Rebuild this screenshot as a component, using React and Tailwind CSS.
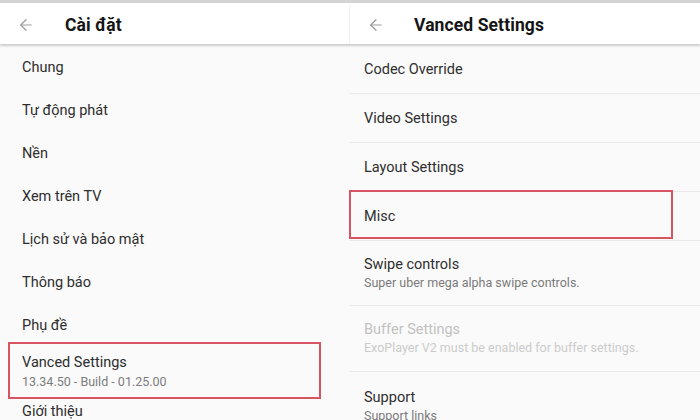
import { ArrowLeft } from 'lucide-react'

const leftItems = ['Chung', 'Tự động phát', 'Nền', 'Xem trên TV', 'Lịch sử và bảo mật', 'Thông báo', 'Phụ đề']

function Header({ title, titleLeft }) {
  return (
    <div className="relative z-10 h-[41px] shrink-0 pt-[3px] bg-white flex items-center shadow-[0_2px_2px_rgba(0,0,0,0.18)]">
      <ArrowLeft className="ml-[17px] text-[#9b9b9b]" size={18} strokeWidth={1.6} />
      <span className={`${titleLeft} text-[17.5px] font-bold text-[#151515] tracking-[0.1px]`}>{title}</span>
    </div>
  )
}

function Row({ title, sub, disabled, h }) {
  return (
    <div className={`${h} shrink-0 flex flex-col justify-center pl-[14px] border-b border-[#e8e8e8]`}>
      <span className={`text-[14.5px] leading-[19px] ${disabled ? 'text-[#c2c2c2]' : 'text-[#2e2e2e]'}`}>{title}</span>
      {sub && (
        <span className={`text-[12.5px] leading-[18px] ${disabled ? 'text-[#cccccc]' : 'text-[#7a7a7a]'}`}>{sub}</span>
      )}
    </div>
  )
}

export default function App() {
  return (
    <div className="w-[700px] h-[420px] overflow-hidden bg-[#fafafa] flex flex-col" style={{ fontFamily: 'Roboto, "Noto Sans", sans-serif' }}>
      <div className="h-[3px] shrink-0 bg-[#d4d4d4]" />
      <div className="flex shrink-0">
        {/* Left panel */}
        <div className="w-[350px] flex flex-col">
          <Header title="Cài đặt" titleLeft="ml-[30px]" />
          <div className="pt-[2px]">
            {leftItems.map((item) => (
              <div key={item} className="h-[43px] flex items-center pl-[22px] text-[14.5px] text-[#2e2e2e]">
                {item}
              </div>
            ))}
            <div className="relative h-[50px] flex flex-col justify-center pl-[22px]">
              <div className="absolute left-[8px] right-[29px] top-[-5px] bottom-[-2px] border-2 border-[#d65560]" />
              <span className="text-[14.5px] leading-[20px] text-[#2e2e2e]">Vanced Settings</span>
              <span className="text-[12.5px] leading-[18px] text-[#7d7d7d]">13.34.50 - Build - 01.25.00</span>
            </div>
            <div className="h-[30px] flex items-center pl-[22px] text-[14.5px] text-[#2e2e2e]">Giới thiệu</div>
          </div>
        </div>
        {/* Right panel */}
        <div className="w-[350px] flex flex-col">
          <Header title="Vanced Settings" titleLeft="ml-[29px]" />
          <div className="pt-[1px]">
            <Row title="Codec Override" h="h-[49px]" />
            <Row title="Video Settings" h="h-[49px]" />
            <Row title="Layout Settings" h="h-[49px]" />
            <div className="relative">
              <div className="absolute left-[-1px] right-[27px] top-[-2px] bottom-[2px] border-2 border-[#d65560] z-10" />
              <Row title="Misc" h="h-[49px]" />
            </div>
            <Row title="Swipe controls" sub="Super uber mega alpha swipe controls." h="h-[65px]" />
            <Row title="Buffer Settings" sub="ExoPlayer V2 must be enabled for buffer settings." disabled h="h-[66px]" />
            <div className="pl-[14px] pt-[16px] flex flex-col">
              <span className="text-[14.5px] leading-[19px] text-[#2e2e2e]">Support</span>
              <span className="text-[12.5px] leading-[18px] text-[#7a7a7a]">Support links</span>
            </div>
          </div>
        </div>
      </div>
    </div>
  )
}
